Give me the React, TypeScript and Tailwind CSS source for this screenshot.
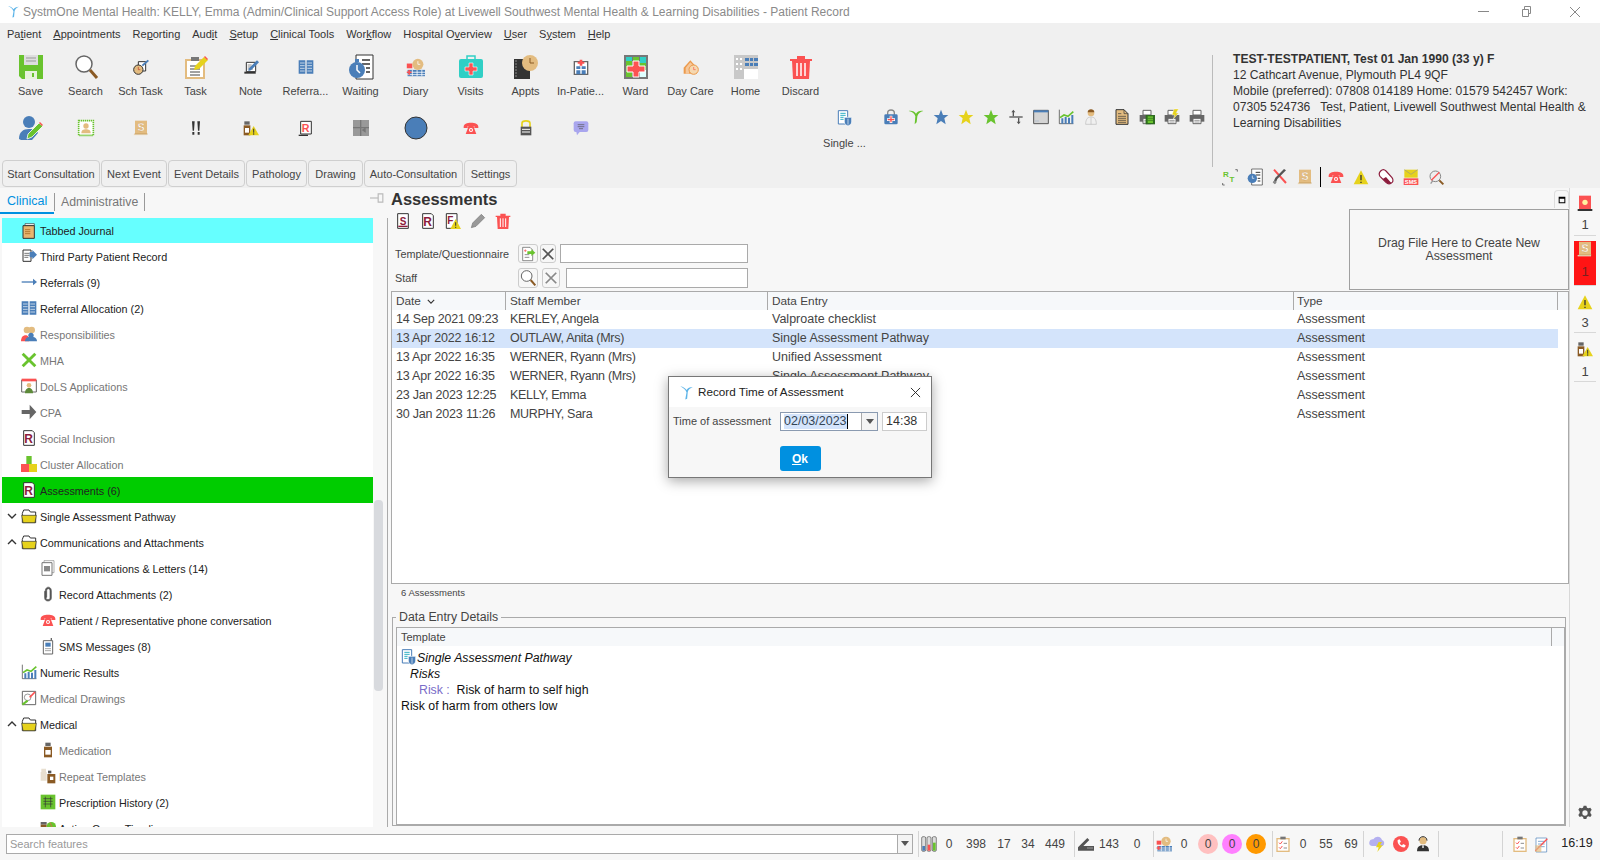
import React from 'react';

const BLUE = '#4a7eb8';
const GREEN = '#69c32e';
const RED = '#fb5252';
const YEL = '#e6d21c';
const TAN = '#e3bc80';
const BRN = '#8a5a24';
const DK = '#333333';
const MAROON = '#8c1c3c';

const star = '12,1 15,9 23,9 17,14 19,23 12,18 5,23 7,14 1,9 9,9';
const warn = <><path d="M12 2 23 23H1z" fill={YEL} /><path d="M11 9h2v8h-2zM11 19h2v2h-2z" fill={DK} /></>;
const phone = <><path d="M1 10c0-4 5-6 11-6s11 2 11 6v2h-6V9H7v3H1z" fill={RED} /><path d="M7 13l1-4h8l1 4 3 8H4z" fill={RED} /><circle cx="12" cy="15" r="3" fill="#fff" /><circle cx="12" cy="15" r="1.5" fill={RED} /></>;
const scroll = <><path d="M3 1h18v20H3z" fill={TAN} /><path d="M1 21h20v2H1z" fill="#f4e6cf" /><path d="M2 21h20" stroke="#b98f50" /><text x="12" y="17" textAnchor="middle" fontSize="16" fontWeight="700" fill="#fff" stroke="#c99a5a" strokeWidth=".5">S</text></>;
const rDoc = (c: string) => <><path d="M4 1h13l3 3v19H4z" fill="#fff" stroke={DK} strokeWidth="1.5" /><text x="11.5" y="19" textAnchor="middle" fontSize="18" fontWeight="700" fill={c}>R</text></>;
const book = <><path d="M1 2h10v20H1zM13 2h10v20H13z" fill={BLUE} /><path d="M3 6h7M3 10h7M3 14h7M3 18h7M14 6h7M14 10h7M14 14h7M14 18h7" stroke="#fff" /></>;
const folder = <><path d="M2 8l2-5h8l2 3h8v16H2z" fill="#fff" stroke={DK} strokeWidth="1.5" /><path d="M1 11h22l-2 11H3z" fill={YEL} stroke={DK} /></>;
const chart = <><path d="M2 1v21h21" fill="none" stroke={DK} /><path d="M5 14h3v8H5zM10 12h3v10h-3zM15 13h3v9h-3zM20 9h3v13h-3z" fill={BLUE} /><path d="M3 13l6-4 6 2 8-7" fill="none" stroke={GREEN} strokeWidth="2.5" /></>;
const bottle = <><path d="M8 1h8v5H8z" fill="#666" /><path d="M6 7h12v16H6z" fill={BRN} /><path d="M8 12h8v7H8z" fill="#fff" /></>;
const printer = <><path d="M6 2h12v7H6z" fill="#fff" stroke="#666" strokeWidth="1.5" /><path d="M1 9h22v10H1z" fill="#666" /><path d="M6 14h12v8H6z" fill="#fff" stroke="#666" strokeWidth="1.5" /><path d="M8 17h8M8 19.500h8" stroke="#666" /></>;

const ICONS: Record<string, React.ReactNode> = {
  logo: <path d="M2 2c6 3 9 6 10 10l-2 11 3-1 1-11c1-4 4-6 8-8-5 0-8 2-10 5C10 5 7 3 2 2z" fill="#5db4e8" />,
  save: <><path d="M0 0h24v24H3l-3-3z" fill={GREEN} /><path d="M5 0h14v10H5z" fill="#dedede" /><path d="M7 3h10M7 6h10" stroke="#999" /><path d="M6 16h12v8H6z" fill="#e6f3da" /><path d="M13 18h2v4h-2z" fill={GREEN} /></>,
  search: <><circle cx="10" cy="9" r="8" fill="#fff" stroke="#666" strokeWidth="1.500" /><path d="M16 15l7 8" stroke={BRN} strokeWidth="3" /></>,
  schtask: <><path d="M8 4h11v14H8z" fill="#fff" stroke={DK} strokeWidth="1.500" /><path d="M13 9l9-8 2 2-9 8z" fill={BLUE} /><circle cx="8" cy="16" r="7" fill={TAN} stroke={DK} strokeWidth="1.500" /><path d="M8 12v4h3" stroke="#c0392b" fill="none" /></>,
  task: <><path d="M1 4h20v20H1z" fill={TAN} /><path d="M3 6h16v16H3z" fill="#fff" /><path d="M7 2h8v4H7z" fill="#777" /><path d="M6 11h10M6 14h10M6 17h10M6 20h10" stroke="#444" /><path d="M11 11L20 2l4 3-9 9-5 1z" fill={YEL} /><path d="M20 2l1-1 3 3-1 1z" fill={RED} /></>,
  note: <><path d="M5 5h14v14H5z" fill="#fff" stroke={DK} strokeWidth="1.500" /><path d="M2 22h17v-3H2z" fill={DK} /><path d="M7 9h6M7 12h5M7 15h8" stroke="#555" /><path d="M9 14L21 2l3 3-12 12-4 1z" fill={BLUE} /></>,
  book,
  waiting: <><path d="M7 0h17v24H7z" fill="#fff" stroke={DK} /><path d="M13 5h8M13 9h8M17 13h4M17 17h4" stroke={DK} strokeWidth="1.500" /><circle cx="8" cy="15" r="8" fill={BLUE} /><path d="M8 10v5l3 3" stroke="#fff" fill="none" strokeWidth="1.500" /><path d="M6 4h4v3H6z" fill={BLUE} /></>,
  diary: <><path d="M1 7h7v6H1z" fill={RED} /><path d="M2 15h22v8H2z" fill={BLUE} /><path d="M2 18h22M2 21h22M8 15v8M14 15v8M20 15v8" stroke="#fff" /><circle cx="15" cy="8" r="7" fill={TAN} /><path d="M15 4v4h3" stroke="#fff" fill="none" /><path d="M1 18h6M4 15v6" stroke={RED} strokeWidth="2" /></>,
  visits: <><path d="M8 5V1h8v4" fill="none" stroke="#30cfc5" strokeWidth="1.500" /><rect x="0" y="4" width="24" height="19" rx="2" fill="#30cfc5" /><path d="M10 8h4v4h4v4h-4v4h-4v-4H6v-4h4z" fill={RED} stroke="#fff" strokeWidth=".6" /></>,
  appts: <><path d="M0 4h16v20H0z" fill={DK} /><path d="M1 6h2M1 9h2M1 12h2M1 15h2M1 18h2M1 21h2" stroke="#888" /><circle cx="16" cy="8" r="8" fill={TAN} /><path d="M16 3v5h4" stroke={BRN} fill="none" /></>,
  inpatient: <><path d="M2 4h20v19H2z" fill="#fff" stroke="#666" strokeWidth="2" /><path d="M5 11h6v4H5zM13 11h6v4h-6zM5 17h6v6H5zM13 17h6v6h-6z" fill={BLUE} /><path d="M10 1h4v3h3v3h-3v3h-4V7H7V4h3z" fill={RED} /></>,
  ward: <><path d="M0 0h24v24H0z" fill="#777" /><path d="M2 2h6v20H2zM9 2h6v20H9zM16 2h6v20h-6z" fill={GREEN} /><path d="M2 2h6v4H2zM16 2h6v6h-6z" fill="#30cfc5" /><path d="M16 15h6v7h-6z" fill="#dff" /><path d="M9 6h6v5h6v6h-6v5H9v-5H3v-6h6z" fill={RED} stroke="#fff" /></>,
  daycare: <><path d="M1 13L11 2l10 11v9H1z" fill="#ec9a4c" /><path d="M4 13l7-8 4 4-6 7v6H4z" fill="#f5c89c" /><circle cx="16" cy="16" r="7" fill="#f5d8b0" stroke="#ec9a4c" strokeWidth="1.500" /><path d="M16 12v4h3" stroke={RED} fill="none" /></>,
  home: <><path d="M0 0h24v24H0z" fill="#c8c8c8" /><path d="M10 14h14v10H10z" fill="#fff" /><path d="M11 3h4v3h-4zM16 3h3v3h-3zM20 3h4v3h-4zM11 8h4v3h-4zM16 8h3v3h-3zM20 8h4v3h-4z" fill={BLUE} /><path d="M2 3h2v2H2zM6 3h2v2H6zM2 8h2v2H2zM6 8h2v2H6zM2 13h2v2H2zM6 13h2v2H6z" fill="#fff" /></>,
  discard: <><path d="M1 4h22v2H1zM8 1h8v3H8z" fill={RED} /><path d="M3 6h18l-1 18H4z" fill={RED} /><path d="M8 8v13M12 8v13M16 8v13" stroke="#fff" strokeWidth="1.500" /></>,
  useredit: <><circle cx="10" cy="6" r="6" fill={BLUE} /><path d="M0 23c0-7 4-10 10-10s8 2 9 4l-6 7H2z" fill={BLUE} /><path d="M8 23l1-5L20 7l4 3-11 11z" fill={GREEN} stroke="#fff" strokeWidth=".8" /><path d="M20 7l1-1 3 3-1 1z" fill={RED} /></>,
  stamp: <><path d="M1 1h22v22H1z" fill="#fff" stroke={GREEN} strokeWidth="2.500" strokeDasharray="2 1" /><circle cx="12" cy="9" r="4" fill={TAN} /><path d="M5 20c0-5 3-6 7-6s7 1 7 6z" fill={TAN} /></>,
  scroll,
  bang: <path d="M6 2h4l-1 14H7zM14 2h4l-1 14h-2zM6.500 18h3v4h-3zM14.500 18h3v4h-3z" fill={DK} />,
  medwarn: <><path d="M2 2h8v5H2z" fill="#666" /><path d="M1 8h10v15H1z" fill={BRN} /><path d="M3 12h6v7H3z" fill="#fff" /><path d="M16 9l8 14H8z" fill={YEL} /><path d="M15.300 13h1.500v6h-1.500zM15.300 20h1.500v2h-1.500z" fill={DK} /></>,
  rred: <><path d="M4 2h16v19H4z" fill="#fff" stroke={DK} strokeWidth="1.500" /><path d="M1 23h14" stroke={DK} strokeWidth="2" /><text x="11.500" y="18" textAnchor="middle" fontSize="16" fontWeight="700" fill={RED}>R</text></>,
  grid: <><path d="M0 0h24v24H0z" fill="#999" /><path d="M11.500 0v24M0 11.500h24" stroke="#777" strokeWidth="2" /><path d="M13 15l6-4v8z" fill="#777" /></>,
  circle: <circle cx="12" cy="12" r="11" fill={BLUE} stroke={DK} strokeWidth="1" />,
  phone,
  lock: <><path d="M6 11V5c0-5 12-5 12 0v6" fill="none" stroke={YEL} strokeWidth="2.500" /><path d="M4 10h16v13H4z" fill="#555" /><path d="M6 14h12M6 18h12" stroke="#fff" strokeWidth="1.500" /></>,
  chat: <><rect x="1" y="2" width="22" height="16" rx="3" fill="#a9a6ee" /><path d="M5 18h5l-4 5z" fill="#a9a6ee" /><path d="M7 7h10M7 10h10M9 13h6" stroke="#555" /></>,
  single: <><path d="M2 1h14v20H2z" fill="#fff" stroke={BLUE} strokeWidth="1.500" /><path d="M5 5h8M5 8h8M5 11h5M5 14h5" stroke="#30b0c5" strokeWidth="1.500" /><path d="M11 11h11v7c0 3-3 5-5.500 6C14 23 11 21 11 18z" fill={BLUE} stroke="#fff" /><path d="M16.500 13v9" stroke="#fff" /></>,
  medlock: <><path d="M7 9V6c0-6 10-6 10 0v3" fill="none" stroke="#888" strokeWidth="2" /><rect x="2" y="8" width="20" height="15" rx="2" fill={BLUE} /><path d="M10 10h4v4h4v4h-4v3h-4v-3H6v-4h4z" fill="#fff" /><path d="M11 11h2v4h4v2h-4v3h-2v-3H7v-2h4z" fill={RED} /></>,
  greenlogo: <path d="M1 3c6 1 9 4 10 8l-1 12 3-3 1-9c1-4 4-7 9-8-5-1-9 1-11 4C10 4 6 2 1 3z" fill={GREEN} />,
  starBlue: <polygon points={star} fill={BLUE} />,
  starYel: <polygon points={star} fill={YEL} />,
  starGreen: <polygon points={star} fill={GREEN} />,
  arrows: <><path d="M2 12h20" stroke="#555" strokeWidth="2" /><path d="M8 11V4M16 13v7" stroke="#555" strokeWidth="2" /><path d="M5 5l3-4 3 4zM13 19l3 4 3-4z" fill="#555" /></>,
  win: <><path d="M1 2h22v20H1z" fill="#d4d4d4" stroke="#555" strokeWidth="1.500" /><path d="M1 2h22v3H1z" fill={BLUE} /><path d="M4 18h1M7 18h1" stroke={BLUE} /></>,
  chart,
  doctor: <><circle cx="12" cy="6" r="5" fill={TAN} /><path d="M7 5c0-6 10-6 10 0z" fill={BRN} /><path d="M4 23c0-8 3-11 8-11s8 3 8 11z" fill="#f0f0f0" stroke="#bbb" /><path d="M12 13v10" stroke="#bbb" /></>,
  tandoc: <><path d="M3 1h12l6 6v16H3z" fill={TAN} stroke={DK} strokeWidth="1.500" /><path d="M6 7h5M6 11h12M6 14h12M6 17h12M6 20h12" stroke={DK} /><path d="M15 1v6h6" fill="none" stroke={DK} /></>,
  printgreen: <>{printer}<path d="M10 9h14v14H10z" fill="#2e6b1f" /><path d="M13 11h8v10h-8z" fill={GREEN} /><path d="M13 14h8M13 17h8" stroke="#2e6b1f" /></>,
  printbolt: <>{printer}<path d="M15 0h7l-4 6h4l-8 9 2-6h-4z" fill={YEL} stroke="#fff" strokeWidth=".6" /></>,
  printer,
  rtt: <><path d="M1 21v3h3" fill="none" stroke={DK} /><text x="6" y="12" textAnchor="middle" fontSize="12" fontWeight="700" fill={GREEN}>R</text><text x="15" y="20" textAnchor="middle" fontSize="12" fontWeight="700" fill={GREEN}>T</text><path d="M20 1h3v3" fill="none" stroke={DK} /></>,
  checkclock: <><path d="M7 0h16v24H7z" fill="#fff" stroke={DK} /><path d="M13 5h7M13 9h7M16 14h4M16 18h4" stroke={DK} strokeWidth="1.500" /><circle cx="8" cy="14" r="7" fill={BLUE} /><path d="M8 10v4h3" stroke="#fff" fill="none" /></>,
  tools: <><path d="M3 1l18 20" stroke={RED} strokeWidth="3" /><path d="M21 2L8 15l-3 7-3-2 3-7L18 0z" fill="#555" /><path d="M1 20l3 3 3-3-3-3z" fill="#888" /></>,
  warn,
  pill: <><path d="M4 3c3-3 6-2 8 0l9 10c3 4 1 7-1 8-3 2-6 1-8-1L3 11C1 8 2 5 4 3z" fill="#fff" stroke={MAROON} strokeWidth="1.800" /><path d="M12 12L20 21c-3 2-6 1-8-1L7 15z" fill={MAROON} /></>,
  sms: <><path d="M2 1h20v12H2z" fill={YEL} /><path d="M2 1l10 7 10-7" fill="none" stroke="#998" /><path d="M1 14h22v10H1z" fill={RED} /><text x="12" y="22.500" textAnchor="middle" fontSize="8.500" fontWeight="700" fill="#fff">SMS</text></>,
  glass: <><path d="M4 22L14 8" stroke="#999" strokeWidth="2" /><circle cx="11" cy="11" r="8" fill="#eee" stroke="#888" strokeWidth="1.500" /><path d="M5 17L17 5" stroke={RED} strokeWidth="2" /><path d="M17 17l6 6" stroke={BRN} strokeWidth="3" /></>,
  journal: <><path d="M6 1h14v3H6z" fill="#fff" stroke={DK} /><path d="M3 4h17v19H3z" fill="#e8b56e" stroke={DK} strokeWidth="1.500" /><path d="M6 10h8M6 13h8M6 16h8" stroke="#b57a30" strokeWidth="1.500" /></>,
  thirdparty: <><path d="M3 3h12v17H3z" fill="#fff" stroke={DK} strokeWidth="1.500" /><path d="M5 8h8M5 11h8M5 14h6" stroke={DK} /><path d="M13 6h4V3l7 7-7 7v-3h-4z" fill={BLUE} /></>,
  arrowBlue: <><path d="M1 11h18v2H1z" fill={BLUE} /><path d="M18 7l6 5-6 5z" fill={BLUE} /></>,
  people: <><circle cx="9" cy="6" r="5" fill={TAN} /><circle cx="16" cy="6" r="5" fill={TAN} /><path d="M0 23c0-6 3-9 7-9s5 3 5 9z" fill={RED} /><circle cx="15" cy="14" r="4" fill={BLUE} /><path d="M6 23c0-5 4-7 9-7s9 2 9 7z" fill={BLUE} /></>,
  cross: <path d="M4 1l8 8 8-8 3 3-8 8 8 8-3 3-8-8-8 8-3-3 8-8-8-8z" fill={GREEN} />,
  dols: <><path d="M1 3h22v18H1z" fill="#fff" stroke="#666" strokeWidth="1.500" /><path d="M1 1h22v4H1z" fill={RED} /><circle cx="12" cy="11" r="3.500" fill={TAN} /><path d="M6 23c0-6 3-8 6-8s6 2 6 8z" fill="#5d8a3a" /></>,
  arrowGray: <path d="M1 9h12V1l10 11-10 11v-8H1z" fill="#666" />,
  rmaroon: rDoc(MAROON),
  blocks: <><path d="M8 0h8v12H8z" fill={GREEN} /><path d="M0 12h12v12H0z" fill={RED} /><path d="M12 12h12v12H12z" fill={YEL} /></>,
  folder,
  comm: <><path d="M6 1h15v18H6z" fill="#fff" stroke="#888" /><path d="M3 4h15v19H3z" fill="#fff" stroke="#777" strokeWidth="1.500" /><path d="M6 9h9v8H6z" fill="#888" /></>,
  clip: <path d="M8 7c0-7 9-7 9 0v11c0 6-10 6-10 0V8h2v10c0 3 6 3 6 0V7c0-4-5-4-5 0v10h-2z" fill="#555" stroke="#555" />,
  smsphone: <><path d="M16 0h2v4h-2z" fill="#666" /><path d="M5 4h14v20H5z" fill="#fff" stroke="#666" strokeWidth="1.500" /><path d="M8 7h8v6H8z" fill={BLUE} /><path d="M8 16h2M11 16h2M14 16h2M8 19h2M11 19h2M14 19h2" stroke="#333" /></>,
  drawing: <><path d="M2 2h20v20H2z" fill="#fff" stroke="#666" strokeWidth="1.500" /><circle cx="10" cy="11" r="5" fill="none" stroke="#666" /><path d="M13 11l8-8" stroke={RED} strokeWidth="2.500" /><path d="M2 22l8-6" stroke={GREEN} strokeWidth="3" /></>,
  bottle,
  repeat: <><path d="M2 1h7v5H2zM1 6h9v13H1z" fill="#e8dfd0" /><path d="M12 4h5v4h-5z" fill="#555" /><path d="M11 9h12v14H11z" fill={BRN} /><path d="M15 13h5v5h-5z" fill="#fff" /></>,
  rx: <><path d="M1 1h22v22H1z" fill={GREEN} /><path d="M8 4v16M16 4v16M5 7h14M5 11h14M5 15h14" stroke={DK} /></>,
  timeline: <><path d="M1 3h9v4H1z" fill="#666" /><path d="M1 7h9v16H1z" fill={BRN} /><circle cx="17" cy="10" r="7" fill={GREEN} /><path d="M15 4l5 11" stroke={RED} /></>,
  alarm: <><path d="M1 21h22v3H1z" fill={DK} /><path d="M3 1h18v20H3z" fill={RED} /><circle cx="12" cy="11" r="4" fill="#fff3a0" /></>,
  pagePlus: <><path d="M4 2h11l4 4v16H4z" fill="#fff" stroke="#555" /><path d="M6 7h4M8 5v4" stroke={RED} /><path d="M7 13h7M7 17h7" stroke="#555" /><path d="M11 8h6V5l6 5-6 5v-3h-6z" fill={GREEN} /></>,
  rsmall: <><path d="M4 1h16v22H4z" fill="#fff" stroke={DK} strokeWidth="1.500" /><text x="12" y="18" textAnchor="middle" fontSize="15" fontWeight="700" fill={MAROON}>S</text><path d="M5 20h14" stroke={MAROON} strokeWidth="2" /></>,
  fwarn: <><path d="M2 1h16v22H2z" fill="#fff" stroke={DK} strokeWidth="1.500" /><text x="8" y="17" textAnchor="middle" fontSize="15" fontWeight="700" fill={MAROON}>F</text><path d="M16 9l8 15H8z" fill={YEL} /><path d="M15.300 14h1.500v5h-1.500zM15.300 20.500h1.500v2h-1.500z" fill={DK} /></>,
  pencil: <path d="M2 22l2-7L17 2l5 5L9 20z" fill="#999" stroke="#777" />,
  scanner: <><path d="M0 17L14 3l3 3-9 9h16v7H0z" fill="#555" /><path d="M14 18h2M17 18h2M20 18h2" stroke="#fff" /></>,
  tubes: <><rect x="1" y="1" width="6" height="22" rx="2" fill="#ddd" stroke="#555" /><path d="M2 15h4v7H2z" fill={BLUE} /><rect x="9" y="1" width="6" height="22" rx="2" fill="#ddd" stroke="#555" /><path d="M10 13h4v9h-4z" fill={RED} /><rect x="17" y="1" width="6" height="22" rx="2" fill="#ddd" stroke="#555" /><path d="M18 10h4v12h-4z" fill={GREEN} /></>,
  clipcheck: <><path d="M2 3h20v21H2z" fill={TAN} /><path d="M4 5h16v17H4z" fill="#fff" /><path d="M8 1h8v4H8z" fill="#777" /><path d="M6 10l2 2 3-4M6 17l2 2 3-4" fill="none" stroke={RED} strokeWidth="1.500" /><path d="M13 11h5M13 18h5" stroke="#555" /></>,
  cloud: <><path d="M3 15a5 5 0 0 1 2-10 7 7 0 0 1 13 1 5 5 0 0 1 1 9z" fill="#b4b0f0" /><path d="M13 9h5l-3 5h4l-8 10 2-7h-4z" fill={YEL} /></>,
  callred: <><circle cx="12" cy="12" r="12" fill={RED} /><path d="M7 6l3-1 2 4-2 1c0 2 2 4 4 4l1-2 4 2-1 3c-6 1-12-5-11-11z" fill="#fff" /></>,
  agent: <><circle cx="12" cy="7" r="5.500" fill={TAN} /><path d="M6 7c0-8 12-8 12 0" fill="none" stroke={DK} strokeWidth="1.500" /><path d="M3 23c0-7 4-9 9-9s9 2 9 9z" fill={DK} /><path d="M11 14h2v4h-2z" fill="#fff" /></>,
  plan: <><path d="M3 3h16v21H3z" fill="#fff" stroke={BLUE} /><path d="M6 8h10M6 12h10M6 16h10" stroke={BLUE} /><path d="M2 22L20 4" stroke={RED} strokeWidth="2" /><path d="M2 14h9v10H2z" fill={TAN} opacity=".7" /></>,
  gear: <path fillRule="evenodd" d="M10 1h4l1 3 2 1 3-1 2 3-2 3v2l2 3-2 3-3-1-2 1-1 3h-4l-1-3-2-1-3 1-2-3 2-3v-2L2 7l2-3 3 1 2-1zM12 8a4 4 0 1 0 0 8 4 4 0 0 0 0-8z" fill="#555" />,
  maxbox: <path fillRule="evenodd" d="M2 2h20v20H2zM5 8v11h14V8z" fill="#000" />,
  x: <path d="M3 3l18 18M21 3L3 21" fill="none" stroke="#555" strokeWidth="3" />,
  xlight: <path d="M3 3l18 18M21 3L3 21" fill="none" stroke="#888" strokeWidth="3" />,
  pin: <><path d="M0 12h14" stroke="#bbb" strokeWidth="2" /><path d="M14 5h8v14h-8z" fill="none" stroke="#bbb" strokeWidth="2" /></>,
};

function I({ n, s = 16 }: { n: string; s?: number }) {
  return <svg viewBox="0 0 24 24" width={s} height={s} className="shrink-0 overflow-visible">{ICONS[n]}</svg>;
}

function Tool({ n, label, s = 24 }: { n: string; label: string; s?: number }) {
  return (
    <div className="w-[55px] flex flex-col items-center">
      <div className="h-[24px] flex items-center justify-center"><I n={n} s={s} /></div>
      <div className="mt-[5px] h-[14px] leading-[14px] text-[11px] text-[#444] whitespace-nowrap">{label}</div>
    </div>
  );
}

function Slot({ n, s = 16 }: { n: string; s?: number }) {
  return <div className="w-[55px] mt-[10px] h-[24px] flex items-center justify-center"><I n={n} s={s} /></div>;
}

function Mini({ n, s = 16 }: { n: string; s?: number }) {
  return <div className="w-[25px] h-[22px] flex items-center justify-center"><I n={n} s={s} /></div>;
}

function U({ children }: { children: React.ReactNode }) {
  return <span className="underline">{children}</span>;
}

const TREE = [
  { label: 'Tabbed Journal', n: 'journal', bg: 'bg-[#66ffff] h-[25px]' },
  { label: 'Third Party Patient Record', n: 'thirdparty' },
  { label: 'Referrals (9)', n: 'arrowBlue' },
  { label: 'Referral Allocation (2)', n: 'book' },
  { label: 'Responsibilities', n: 'people', gray: true },
  { label: 'MHA', n: 'cross', gray: true },
  { label: 'DoLS Applications', n: 'dols', gray: true },
  { label: 'CPA', n: 'arrowGray', gray: true },
  { label: 'Social Inclusion', n: 'rmaroon', gray: true },
  { label: 'Cluster Allocation', n: 'blocks', gray: true },
  { label: 'Assessments (6)', n: 'rmaroon', bg: 'bg-[#00cc00] h-[26px]' },
  { label: 'Single Assessment Pathway', n: 'folder', chev: 'down' },
  { label: 'Communications and Attachments', n: 'folder', chev: 'up' },
  { label: 'Communications & Letters (14)', n: 'comm', sub: true },
  { label: 'Record Attachments (2)', n: 'clip', sub: true },
  { label: 'Patient / Representative phone conversation', n: 'phone', sub: true },
  { label: 'SMS Messages (8)', n: 'smsphone', sub: true },
  { label: 'Numeric Results', n: 'chart' },
  { label: 'Medical Drawings', n: 'drawing', gray: true },
  { label: 'Medical', n: 'folder', chev: 'up' },
  { label: 'Medication', n: 'bottle', sub: true, gray: true },
  { label: 'Repeat Templates', n: 'repeat', sub: true, gray: true },
  { label: 'Prescription History (2)', n: 'rx', sub: true },
  { label: 'Action Group Timeline', n: 'timeline', sub: true },
];

const ROWS = [
  ['14 Sep 2021 09:23', 'KERLEY, Angela', 'Valproate checklist'],
  ['13 Apr 2022 16:12', 'OUTLAW, Anita (Mrs)', 'Single Assessment Pathway'],
  ['13 Apr 2022 16:35', 'WERNER, Ryann (Mrs)', 'Unified Assessment'],
  ['13 Apr 2022 16:35', 'WERNER, Ryann (Mrs)', 'Single Assessment Pathway'],
  ['23 Jan 2023 12:25', 'KELLY, Emma', ''],
  ['30 Jan 2023 11:26', 'MURPHY, Sara', ''],
];

function Sep() {
  return <div className="w-px h-[26px] bg-[#d4d4d4] shrink-0" />;
}

function TreeRow({ label, n, bg, gray, sub, chev }: { label: string; n: string; bg?: string; gray?: boolean; sub?: boolean; chev?: string }) {
  return (
    <div className={`flex items-center shrink-0 ${bg ?? 'h-[26px]'}`}>
      <div className="w-[19px] flex justify-center pl-[1px]">
        {chev && (
          <svg viewBox="0 0 10 6" width="10" height="6">
            <path d={chev === 'down' ? 'M1 1l4 4 4-4' : 'M1 5l4-4 4 4'} fill="none" stroke="#333" strokeWidth="1.400" />
          </svg>
        )}
      </div>
      {sub && <div className="w-[19px]" />}
      <I n={n} s={16} />
      <span className={`ml-[3px] mt-[2px] text-[10.8px] whitespace-nowrap ${gray ? 'text-[#777]' : 'text-[#222]'}`}>{label}</span>
    </div>
  );
}

function Num({ w, children }: { w: string; children: React.ReactNode }) {
  return <div className={`${w} text-center text-[12px] text-[#444] shrink-0`}>{children}</div>;
}

function Cell({ w, n, s = 16 }: { w: string; n: string; s?: number }) {
  return <div className={`${w} flex justify-center shrink-0`}><I n={n} s={s} /></div>;
}

export default function App() {
  return (
    <div className="relative w-[1600px] h-[860px] overflow-hidden flex flex-col bg-[#f7f7f7] [font-family:'Liberation_Sans',Arial,sans-serif]">
      {/* title bar */}
      <div className="h-[23px] bg-white flex items-center shrink-0">
        <div className="ml-[7px] w-[16px]"><I n="logo" s={13} /></div>
        <span className="text-[12px] text-[#8a8a8a] whitespace-nowrap">SystmOne Mental Health: KELLY, Emma (Admin/Clinical Support Access Role) at Livewell Southwest Mental Health &amp; Learning Disabilities - Patient Record</span>
        <div className="ml-auto flex items-center">
          <div className="w-[11px] h-px bg-[#888] mr-[32px]" />
          <svg viewBox="0 0 11 11" width="11" height="11" className="mr-[37px]"><path d="M1.500 3.500h6v7h-6zM3.500 3.500v-3h6v7h-2" fill="none" stroke="#888" /></svg>
          <svg viewBox="0 0 12 12" width="12" height="12" className="mr-[19px]"><path d="M1 1l10 10M11 1L1 11" stroke="#888" /></svg>
        </div>
      </div>

      {/* chrome */}
      <div className="bg-[#f0f0f0] shrink-0">
        <div className="h-[22px] flex items-center gap-[12px] pl-[7px] text-[11px] text-[#333]">
          <span>Pa<U>t</U>ient</span>
          <span><U>A</U>ppointments</span>
          <span>Re<U>p</U>orting</span>
          <span>Aud<U>i</U>t</span>
          <span><U>S</U>etup</span>
          <span><U>C</U>linical Tools</span>
          <span>Wor<U>k</U>flow</span>
          <span>Hospital O<U>v</U>erview</span>
          <span><U>U</U>ser</span>
          <span>S<U>y</U>stem</span>
          <span><U>H</U>elp</span>
        </div>
        <div className="flex h-[143px]">
          <div className="w-[1212px] shrink-0 pl-[3px]">
            <div className="flex pt-[10px]">
              <Tool n="save" label="Save" />
              <Tool n="search" label="Search" />
              <Tool n="schtask" label="Sch Task" s={16} />
              <Tool n="task" label="Task" />
              <Tool n="note" label="Note" s={16} />
              <Tool n="book" label="Referra..." s={16} />
              <Tool n="waiting" label="Waiting" />
              <Tool n="diary" label="Diary" s={19} />
              <Tool n="visits" label="Visits" />
              <Tool n="appts" label="Appts" />
              <Tool n="inpatient" label="In-Patie..." s={16} />
              <Tool n="ward" label="Ward" />
              <Tool n="daycare" label="Day Care" s={16} />
              <Tool n="home" label="Home" />
              <Tool n="discard" label="Discard" />
            </div>
            <div className="flex mt-[8px] h-[54px]">
              <Slot n="useredit" s={24} />
              <Slot n="stamp" />
              <Slot n="scroll" />
              <Slot n="bang" />
              <Slot n="medwarn" />
              <Slot n="rred" />
              <Slot n="grid" />
              <Slot n="circle" s={24} />
              <Slot n="phone" />
              <Slot n="lock" />
              <Slot n="chat" />
              <div className="w-[264px] shrink-0 flex justify-end">
                <div className="w-[55px] flex flex-col items-center">
                  <div className="h-[24px] flex items-center"><I n="single" s={16} /></div>
                  <div className="mt-[6px] text-[11px] leading-[14px] text-[#444]">Single ...</div>
                </div>
              </div>
              <div className="w-[6px] shrink-0" />
              <Mini n="medlock" />
              <Mini n="greenlogo" />
              <Mini n="starBlue" />
              <Mini n="starYel" />
              <Mini n="starGreen" />
              <Mini n="arrows" />
              <Mini n="win" />
              <Mini n="chart" />
              <Mini n="doctor" />
              <div className="w-[6px] shrink-0" />
              <Mini n="tandoc" />
              <Mini n="printgreen" />
              <Mini n="printbolt" />
              <Mini n="printer" />
            </div>
            <div className="flex gap-[1px] -ml-[1px] h-[27px] text-[11px] text-[#444]">
              <div className="w-[98px] pt-[1px] flex items-center justify-center rounded-[4px] border border-[#cfcfcf]">Start Consultation</div>
              <div className="w-[66px] pt-[1px] flex items-center justify-center rounded-[4px] border border-[#cfcfcf]">Next Event</div>
              <div className="w-[77px] pt-[1px] flex items-center justify-center rounded-[4px] border border-[#cfcfcf]">Event Details</div>
              <div className="w-[61px] pt-[1px] flex items-center justify-center rounded-[4px] border border-[#cfcfcf]">Pathology</div>
              <div className="w-[55px] pt-[1px] flex items-center justify-center rounded-[4px] border border-[#cfcfcf]">Drawing</div>
              <div className="w-[99px] pt-[1px] flex items-center justify-center rounded-[4px] border border-[#cfcfcf]">Auto-Consultation</div>
              <div className="w-[53px] pt-[1px] flex items-center justify-center rounded-[4px] border border-[#cfcfcf]">Settings</div>
            </div>
          </div>
          <div className="flex-1 flex flex-col pt-[10px]">
            <div className="h-[112px] border-l border-[#bbbbbb] pl-[20px]">
              <div className="-mt-[4px] text-[12.100px] leading-[16px] text-[#333] whitespace-pre">
                <div className="font-bold">TEST-TESTPATIENT, Test 01 Jan 1990 (33 y) F</div>
                <div>12 Cathcart Avenue, Plymouth PL4 9QF</div>
                <div>Mobile (preferred): 07808 014189 Home: 01579 542457 Work:</div>
                <div>07305 524736   Test, Patient, Livewell Southwest Mental Health &amp;</div>
                <div>Learning Disabilities</div>
              </div>
            </div>
            <div className="flex items-center h-[20px] pl-[5px]">
              <div className="w-[25px] flex justify-center"><I n="rtt" /></div>
              <div className="w-[25px] flex justify-center"><I n="checkclock" /></div>
              <div className="w-[25px] flex justify-center"><I n="tools" /></div>
              <div className="w-[25px] flex justify-center"><I n="scroll" /></div>
              <div className="ml-[3px] mr-[2px] w-px h-[20px] bg-black" />
              <div className="w-[25px] flex justify-center"><I n="phone" /></div>
              <div className="w-[25px] flex justify-center"><I n="warn" /></div>
              <div className="w-[25px] flex justify-center"><I n="pill" /></div>
              <div className="w-[25px] flex justify-center"><I n="sms" /></div>
              <div className="w-[25px] flex justify-center"><I n="glass" /></div>
            </div>
          </div>
        </div>
      </div>

      {/* body */}
      <div className="flex-1 flex min-h-0">
        {/* left panel */}
        <div className="w-[388px] shrink-0 flex flex-col">
          <div className="h-[30px] flex items-start relative shrink-0">
            <div className="w-[54px] h-[26px] pt-[3px] border-b-2 border-[#0090e0] flex items-center pl-[7px] text-[12.500px] text-[#0090e0]">Clinical</div>
            <div className="w-px h-[18px] mt-[5px] bg-[#999]" />
            <div className="w-[89px] h-[26px] pt-[3px] flex items-center pl-[6px] text-[12.300px] text-[#777]">Administrative</div>
            <div className="w-px h-[18px] mt-[5px] bg-[#999]" />
            <div className="ml-auto mt-[3px] mr-[4px]"><I n="pin" s={14} /></div>
          </div>
          <div className="flex-1 flex min-h-0 border-r border-[#aaaaaa]">
            <div className="w-[371px] ml-[2px] bg-white flex flex-col overflow-hidden">
              {TREE.map((t) => <TreeRow key={t.label} {...t} />)}
            </div>
            <div className="w-[9px] ml-[1px]">
              <div className="mt-[282px] h-[191px] rounded-[4px] bg-[#d8dade]" />
            </div>
          </div>
        </div>

        {/* assessments */}
        <div className="flex-1 min-w-0 flex flex-col pl-[3px]">
          <div className="h-[103px] flex shrink-0">
            <div className="flex-1 min-w-0">
              <div className="h-[22px] flex items-center text-[16.500px] font-bold text-[#333]">Assessments</div>
              <div className="h-[22px] flex items-center pl-[4px] gap-[9px]">
                <I n="rsmall" s={16} />
                <I n="rmaroon" s={16} />
                <I n="fwarn" s={16} />
                <I n="pencil" s={16} />
                <I n="discard" s={16} />
              </div>
              <div className="mt-[12px] h-[19px] flex items-center pl-[4px] text-[10.800px] text-[#444]">
                <div className="w-[123px] pt-[1px]">Template/Questionnaire</div>
                <div className="w-[20px] h-[19px] rounded-[3px] border border-[#cccccc] flex items-center justify-center"><I n="pagePlus" s={16} /></div>
                <div className="ml-[2px] w-[16px] h-[19px] rounded-[3px] border border-[#cccccc] flex items-center justify-center"><I n="x" s={14} /></div>
                <div className="ml-[4px] w-[188px] h-[19px] border border-[#aaaaaa] bg-white" />
              </div>
              <div className="mt-[5px] h-[20px] flex items-center pl-[4px] text-[10.800px] text-[#444]">
                <div className="w-[123px]">Staff</div>
                <div className="w-[20px] h-[20px] rounded-[3px] border border-[#cccccc] flex items-center justify-center"><I n="search" s={16} /></div>
                <div className="ml-[4px] w-[18px] h-[20px] rounded-[3px] border border-[#cccccc] flex items-center justify-center"><I n="xlight" s={14} /></div>
                <div className="ml-[6px] w-[182px] h-[20px] border border-[#aaaaaa] bg-white" />
              </div>
            </div>
            <div className="w-[220px] shrink-0 flex flex-col">
              <div className="h-[21px] flex justify-end items-end pb-[1px]">
                <div className="w-[15px] h-[18px] rounded-t-[4px] border border-b-0 border-[#dddddd] flex items-center justify-center"><I n="maxbox" s={8} /></div>
              </div>
              <div className="h-[81px] border border-[#a0a0a0] flex items-center justify-center text-center text-[12.300px] leading-[13px] text-[#444]">Drag File Here to Create New<br />Assessment</div>
            </div>
          </div>

          <div className="h-[293px] shrink-0 border border-[#aaaaaa] bg-white flex flex-col">
            <div className="h-[18px] shrink-0 bg-[#f6f8fa] flex text-[11.800px] text-[#444]">
              <div className="w-[114px] border-r border-[#aaaaaa] pl-[4px] pt-[1px] flex items-center gap-[6px]">
                Date
                <svg viewBox="0 0 10 6" width="8" height="5"><path d="M1 1l4 4 4-4" fill="none" stroke="#333" strokeWidth="1.400" /></svg>
              </div>
              <div className="w-[262px] border-r border-[#aaaaaa] pl-[4px] pt-[1px] flex items-center">Staff Member</div>
              <div className="w-[526px] border-r border-[#aaaaaa] pl-[4px] pt-[1px] flex items-center">Data Entry</div>
              <div className="w-[264px] border-r border-[#aaaaaa] pl-[3px] pt-[1px] flex items-center">Type</div>
            </div>
            {ROWS.map((r, i) => (
              <div key={r[0] + i} className={`h-[19px] w-[1166px] flex items-center text-[12.500px] text-[#444] ${i === 1 ? 'bg-[#d4e4fb]' : ''}`}>
                <div className="w-[114px] pl-[4px] whitespace-nowrap tracking-[-0.2px]">{r[0]}</div>
                <div className="w-[262px] pl-[4px] tracking-[-0.3px]">{r[1]}</div>
                <div className="w-[526px] pl-[4px]">{r[2]}</div>
                <div className="pl-[3px]">Assessment</div>
              </div>
            ))}
          </div>

          <div className="h-[19px] shrink-0 flex items-center pl-[10px] text-[9.500px] text-[#444]">6 Assessments</div>

          <fieldset className="mt-[7px] ml-[1px] w-[1174px] border border-[#aaaaaa] pl-[3px]">
            <legend className="px-[3px] text-[12.300px] leading-[15px] text-[#444]">Data Entry Details</legend>
            <div className="mt-[2px] h-[198px] border border-[#aaaaaa] bg-white flex flex-col">
              <div className="h-[18px] shrink-0 bg-[#f6f8fa] flex items-center">
                <div className="w-[1155px] border-r border-[#aaaaaa] h-[18px] pl-[4px] flex items-center text-[11px] text-[#444]">Template</div>
              </div>
              <div className="pl-[4px] pt-[4px] text-[12.300px] leading-[16px] text-[#111]">
                <div className="flex items-center italic"><span className="-mt-[3px]"><I n="single" s={16} /></span>Single Assessment Pathway</div>
                <div className="italic pl-[9px]">Risks</div>
                <div className="pl-[18px] whitespace-pre"><span className="text-[#7a6cc8]">Risk :</span>  Risk of harm to self high</div>
                <div>Risk of harm from others low</div>
              </div>
            </div>
          </fieldset>
        </div>

        {/* right rail */}
        <div className="w-[31px] shrink-0 border-l border-[#d8d8d8] flex flex-col items-center text-[13px] text-[#444]">
          <div className="w-[22px] h-[48px] pt-[7px] flex flex-col items-center border-b border-[#d8d8d8]">
            <I n="alarm" s={16} />
            <div className="mt-[6px] leading-[16px]">1</div>
          </div>
          <div className="mt-[5px] w-[22px] h-[44px] bg-[#ff1414] flex flex-col items-center">
            <I n="scroll" s={16} />
            <div className="mt-[7px] leading-[16px] text-[#7a2020]">1</div>
          </div>
          <div className="w-[22px] h-[48px] pt-[8px] flex flex-col items-center border-y border-[#d8d8d8]">
            <I n="warn" s={16} />
            <div className="mt-[5px] leading-[16px]">3</div>
          </div>
          <div className="w-[22px] h-[49px] pt-[8px] flex flex-col items-center border-b border-[#d8d8d8]">
            <I n="medwarn" s={16} />
            <div className="mt-[7px] leading-[16px]">1</div>
          </div>
          <div className="mt-auto mb-[6px]"><I n="gear" s={16} /></div>
        </div>
      </div>

      {/* status bar */}
      <div className="h-[33px] shrink-0 flex items-center">
        <div className="ml-[6px] w-[907px] h-[20px] border border-[#aaaaaa] bg-white flex items-center justify-between shrink-0">
          <span className="pl-[3px] pt-[1px] text-[11px] text-[#999]">Search features</span>
          <div className="w-[15px] h-[18px] border-l border-[#aaaaaa] bg-[#f4f4f4] flex items-center justify-center">
            <svg viewBox="0 0 8 5" width="8" height="5"><path d="M0 0h8L4 5z" fill="#555" /></svg>
          </div>
        </div>
        <div className="w-[5px]" />
        <Sep />
        <Cell w="w-[20px]" n="tubes" />
        <Num w="w-[20px]">0</Num>
        <Num w="w-[34px]">398</Num>
        <Num w="w-[22px]">17</Num>
        <Num w="w-[26px]">34</Num>
        <Num w="w-[28px]">449</Num>
        <div className="w-[5px]" />
        <Sep />
        <Cell w="w-[22px]" n="scanner" />
        <Num w="w-[24px]">143</Num>
        <Num w="w-[32px]">0</Num>
        <Sep />
        <Cell w="w-[20px]" n="diary" />
        <Num w="w-[20px]">0</Num>
        <div className="w-[28px] flex justify-center shrink-0"><div className="w-[20px] h-[20px] rounded-full bg-[#ffc0c0] flex items-center justify-center text-[12px] text-[#444]">0</div></div>
        <div className="w-[20px] flex justify-center shrink-0"><div className="w-[20px] h-[20px] rounded-full bg-[#ff80ff] flex items-center justify-center text-[12px] text-[#444]">0</div></div>
        <div className="w-[28px] flex justify-center shrink-0"><div className="w-[20px] h-[20px] rounded-full bg-[#ff9900] flex items-center justify-center text-[12px] text-[#444]">0</div></div>
        <div className="w-[2px]" />
        <Sep />
        <Cell w="w-[20px]" n="clipcheck" />
        <Num w="w-[20px]">0</Num>
        <Num w="w-[26px]">55</Num>
        <Num w="w-[24px]">69</Num>
        <Sep />
        <Cell w="w-[28px]" n="cloud" />
        <Cell w="w-[18px]" n="callred" />
        <Cell w="w-[26px]" n="agent" />
        <div className="w-[2px]" />
        <Sep />
        <div className="w-[63px]" />
        <Sep />
        <div className="w-[7px]" />
        <Cell w="w-[20px]" n="clipcheck" />
        <div className="w-[2px]" />
        <Cell w="w-[20px]" n="plan" />
        <div className="ml-[3px] w-[44px] text-center text-[12.500px] text-[#222]">16:19</div>
      </div>

      {/* dialog */}
      <div className="absolute left-[668px] top-[376px] w-[264px] h-[102px] border border-[#777] bg-[#f7f7f7] shadow-[0_3px_12px_rgba(0,0,0,0.35)] flex flex-col">
        <div className="h-[30px] bg-white flex items-center shrink-0">
          <div className="ml-[10px] w-[19px]"><I n="logo" s={15} /></div>
          <span className="text-[11.700px] text-[#222] -mt-[1px]">Record Time of Assessment</span>
          <svg viewBox="0 0 12 12" width="11" height="11" className="ml-auto mr-[10px]"><path d="M1 1l10 10M11 1L1 11" stroke="#222" /></svg>
        </div>
        <div className="mt-[5px] h-[19px] flex items-center pl-[4px]">
          <span className="w-[107px] text-[11px] text-[#444]">Time of assessment</span>
          <div className="w-[98px] h-[19px] border border-[#8a9ab0] bg-white flex items-center">
            <span className="ml-[3px] bg-[#d4e4fb] text-[12.500px] leading-[15px] text-[#345] border-r border-black">02/03/2023</span>
            <div className="ml-auto w-[16px] h-[17px] border-l border-[#aaaaaa] bg-[#f4f4f4] flex items-center justify-center">
              <svg viewBox="0 0 8 5" width="8" height="5"><path d="M0 0h8L4 5z" fill="#555" /></svg>
            </div>
          </div>
          <div className="ml-[4px] w-[45px] h-[19px] border border-[#cccccc] bg-white pl-[3px] flex items-center text-[12.500px] text-[#333]">14:38</div>
        </div>
        <div className="mt-[15px] flex justify-center">
          <div className="w-[41px] h-[25px] rounded-[3px] bg-[#0090e0] flex items-center justify-center text-[12px] font-bold text-white"><span className="underline">O</span>k</div>
        </div>
      </div>
    </div>
  );
}
